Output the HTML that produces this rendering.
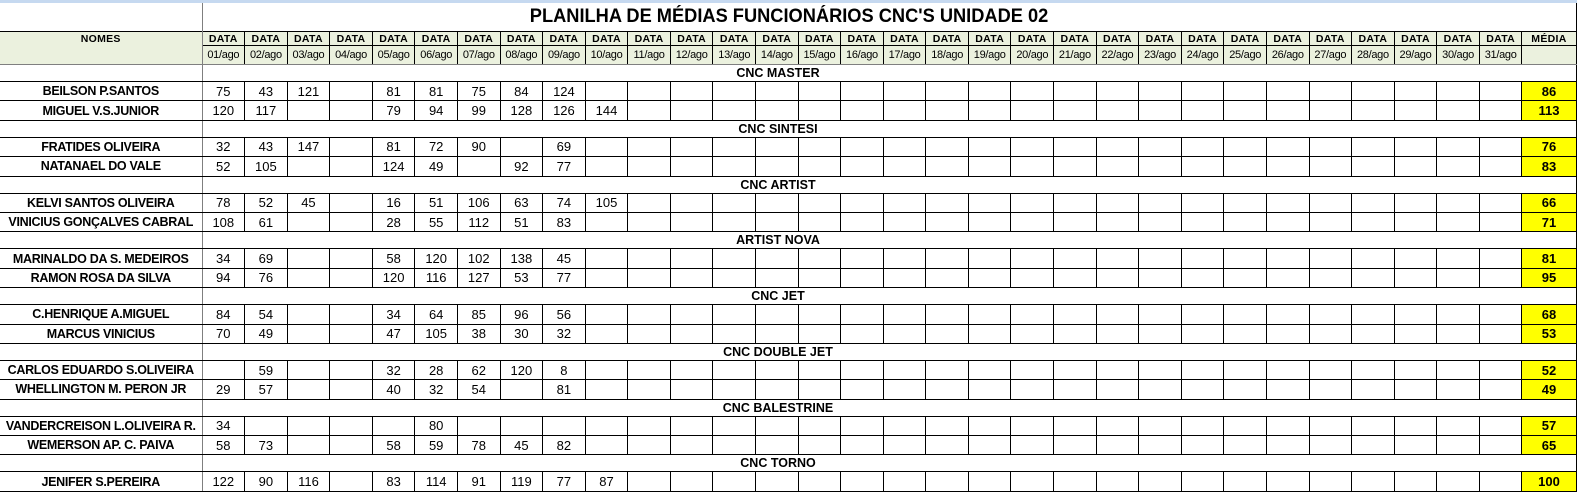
<!DOCTYPE html>
<html><head><meta charset="utf-8">
<style>
html,body{margin:0;padding:0;background:#fff;width:1577px;height:491px;overflow:hidden}
.top{position:absolute;left:0;top:0;width:1577px;height:3px;background:#c6d9f0}
table{position:absolute;left:0;top:3px;border-collapse:collapse;table-layout:fixed;width:1576px;font-family:"Liberation Sans",Arial,sans-serif;color:#000}
td{border:1px solid #000;padding:0;text-align:center;vertical-align:middle;overflow:hidden;white-space:nowrap;font-size:13px}
td.n{border-left:none;border-right:1px solid #7f7f7f;font-weight:bold;font-size:12.5px;letter-spacing:-0.3px}
tr.t td{border:none;height:28px}
tr.t td.n{border-right:1px solid #7f7f7f}
tr.t td.ti{font-size:19px;font-weight:bold;border-right:1px solid #000;padding-right:200px}
tr.t td.ti span{display:inline-block;transform:scaleX(0.96)}
tr.h1 td{background:#ebf1de;font-weight:bold;font-size:10.5px;height:13px;letter-spacing:0.3px}
tr.h2 td{background:#ebf1de;font-size:11px;height:18px;letter-spacing:-0.3px}
tr.h1 td.n{border-top:1px solid #000;border-bottom:none}
tr.h2 td.n{border-top:none;border-bottom:1px solid #7f7f7f}
tr.h2 td{border-bottom:1px solid #7f7f7f}
tr.s td{height:16px;border-left:none;border-right:none;font-weight:bold;font-size:12.5px}
tr.s td.n{border-right:1px solid #7f7f7f}
tr.s td.sc{border-right:1px solid #000;padding-right:222px}
tr.r td{height:18.4px}
td.m{background:#ffff00;font-weight:bold;border-right:1px solid #000}
</style></head><body>
<div class="top"></div>
<table>
<colgroup><col style="width:202px">
<col span="31" style="width:42.58px"><col style="width:54px"></colgroup>
<tr class="t"><td class="n"></td><td class="ti" colspan="32"><span>PLANILHA DE MÉDIAS FUNCIONÁRIOS CNC'S UNIDADE 02</span></td></tr>
<tr class="h1"><td class="n">NOMES</td><td>DATA</td><td>DATA</td><td>DATA</td><td>DATA</td><td>DATA</td><td>DATA</td><td>DATA</td><td>DATA</td><td>DATA</td><td>DATA</td><td>DATA</td><td>DATA</td><td>DATA</td><td>DATA</td><td>DATA</td><td>DATA</td><td>DATA</td><td>DATA</td><td>DATA</td><td>DATA</td><td>DATA</td><td>DATA</td><td>DATA</td><td>DATA</td><td>DATA</td><td>DATA</td><td>DATA</td><td>DATA</td><td>DATA</td><td>DATA</td><td>DATA</td><td>MÉDIA</td></tr>
<tr class="h2"><td class="n"></td><td>01/ago</td><td>02/ago</td><td>03/ago</td><td>04/ago</td><td>05/ago</td><td>06/ago</td><td>07/ago</td><td>08/ago</td><td>09/ago</td><td>10/ago</td><td>11/ago</td><td>12/ago</td><td>13/ago</td><td>14/ago</td><td>15/ago</td><td>16/ago</td><td>17/ago</td><td>18/ago</td><td>19/ago</td><td>20/ago</td><td>21/ago</td><td>22/ago</td><td>23/ago</td><td>24/ago</td><td>25/ago</td><td>26/ago</td><td>27/ago</td><td>28/ago</td><td>29/ago</td><td>30/ago</td><td>31/ago</td><td></td></tr>

<tr class="s"><td class="n"></td><td class="sc" colspan="32">CNC MASTER</td></tr>
<tr class="r"><td class="n">BEILSON P.SANTOS</td><td>75</td><td>43</td><td>121</td><td></td><td>81</td><td>81</td><td>75</td><td>84</td><td>124</td><td></td><td></td><td></td><td></td><td></td><td></td><td></td><td></td><td></td><td></td><td></td><td></td><td></td><td></td><td></td><td></td><td></td><td></td><td></td><td></td><td></td><td></td><td class="m">86</td></tr>
<tr class="r"><td class="n">MIGUEL V.S.JUNIOR</td><td>120</td><td>117</td><td></td><td></td><td>79</td><td>94</td><td>99</td><td>128</td><td>126</td><td>144</td><td></td><td></td><td></td><td></td><td></td><td></td><td></td><td></td><td></td><td></td><td></td><td></td><td></td><td></td><td></td><td></td><td></td><td></td><td></td><td></td><td></td><td class="m">113</td></tr>

<tr class="s"><td class="n"></td><td class="sc" colspan="32">CNC SINTESI</td></tr>
<tr class="r"><td class="n">FRATIDES OLIVEIRA</td><td>32</td><td>43</td><td>147</td><td></td><td>81</td><td>72</td><td>90</td><td></td><td>69</td><td></td><td></td><td></td><td></td><td></td><td></td><td></td><td></td><td></td><td></td><td></td><td></td><td></td><td></td><td></td><td></td><td></td><td></td><td></td><td></td><td></td><td></td><td class="m">76</td></tr>
<tr class="r"><td class="n">NATANAEL DO VALE</td><td>52</td><td>105</td><td></td><td></td><td>124</td><td>49</td><td></td><td>92</td><td>77</td><td></td><td></td><td></td><td></td><td></td><td></td><td></td><td></td><td></td><td></td><td></td><td></td><td></td><td></td><td></td><td></td><td></td><td></td><td></td><td></td><td></td><td></td><td class="m">83</td></tr>

<tr class="s"><td class="n"></td><td class="sc" colspan="32">CNC ARTIST</td></tr>
<tr class="r"><td class="n">KELVI SANTOS OLIVEIRA</td><td>78</td><td>52</td><td>45</td><td></td><td>16</td><td>51</td><td>106</td><td>63</td><td>74</td><td>105</td><td></td><td></td><td></td><td></td><td></td><td></td><td></td><td></td><td></td><td></td><td></td><td></td><td></td><td></td><td></td><td></td><td></td><td></td><td></td><td></td><td></td><td class="m">66</td></tr>
<tr class="r"><td class="n">VINICIUS GONÇALVES CABRAL</td><td>108</td><td>61</td><td></td><td></td><td>28</td><td>55</td><td>112</td><td>51</td><td>83</td><td></td><td></td><td></td><td></td><td></td><td></td><td></td><td></td><td></td><td></td><td></td><td></td><td></td><td></td><td></td><td></td><td></td><td></td><td></td><td></td><td></td><td></td><td class="m">71</td></tr>

<tr class="s"><td class="n"></td><td class="sc" colspan="32">ARTIST NOVA</td></tr>
<tr class="r"><td class="n">MARINALDO DA S. MEDEIROS</td><td>34</td><td>69</td><td></td><td></td><td>58</td><td>120</td><td>102</td><td>138</td><td>45</td><td></td><td></td><td></td><td></td><td></td><td></td><td></td><td></td><td></td><td></td><td></td><td></td><td></td><td></td><td></td><td></td><td></td><td></td><td></td><td></td><td></td><td></td><td class="m">81</td></tr>
<tr class="r"><td class="n">RAMON ROSA DA SILVA</td><td>94</td><td>76</td><td></td><td></td><td>120</td><td>116</td><td>127</td><td>53</td><td>77</td><td></td><td></td><td></td><td></td><td></td><td></td><td></td><td></td><td></td><td></td><td></td><td></td><td></td><td></td><td></td><td></td><td></td><td></td><td></td><td></td><td></td><td></td><td class="m">95</td></tr>

<tr class="s"><td class="n"></td><td class="sc" colspan="32">CNC JET</td></tr>
<tr class="r"><td class="n">C.HENRIQUE A.MIGUEL</td><td>84</td><td>54</td><td></td><td></td><td>34</td><td>64</td><td>85</td><td>96</td><td>56</td><td></td><td></td><td></td><td></td><td></td><td></td><td></td><td></td><td></td><td></td><td></td><td></td><td></td><td></td><td></td><td></td><td></td><td></td><td></td><td></td><td></td><td></td><td class="m">68</td></tr>
<tr class="r"><td class="n">MARCUS VINICIUS</td><td>70</td><td>49</td><td></td><td></td><td>47</td><td>105</td><td>38</td><td>30</td><td>32</td><td></td><td></td><td></td><td></td><td></td><td></td><td></td><td></td><td></td><td></td><td></td><td></td><td></td><td></td><td></td><td></td><td></td><td></td><td></td><td></td><td></td><td></td><td class="m">53</td></tr>

<tr class="s"><td class="n"></td><td class="sc" colspan="32">CNC DOUBLE JET</td></tr>
<tr class="r"><td class="n">CARLOS EDUARDO S.OLIVEIRA</td><td></td><td>59</td><td></td><td></td><td>32</td><td>28</td><td>62</td><td>120</td><td>8</td><td></td><td></td><td></td><td></td><td></td><td></td><td></td><td></td><td></td><td></td><td></td><td></td><td></td><td></td><td></td><td></td><td></td><td></td><td></td><td></td><td></td><td></td><td class="m">52</td></tr>
<tr class="r"><td class="n">WHELLINGTON M. PERON JR</td><td>29</td><td>57</td><td></td><td></td><td>40</td><td>32</td><td>54</td><td></td><td>81</td><td></td><td></td><td></td><td></td><td></td><td></td><td></td><td></td><td></td><td></td><td></td><td></td><td></td><td></td><td></td><td></td><td></td><td></td><td></td><td></td><td></td><td></td><td class="m">49</td></tr>

<tr class="s"><td class="n"></td><td class="sc" colspan="32">CNC BALESTRINE</td></tr>
<tr class="r"><td class="n">VANDERCREISON L.OLIVEIRA R.</td><td>34</td><td></td><td></td><td></td><td></td><td>80</td><td></td><td></td><td></td><td></td><td></td><td></td><td></td><td></td><td></td><td></td><td></td><td></td><td></td><td></td><td></td><td></td><td></td><td></td><td></td><td></td><td></td><td></td><td></td><td></td><td></td><td class="m">57</td></tr>
<tr class="r"><td class="n">WEMERSON AP. C. PAIVA</td><td>58</td><td>73</td><td></td><td></td><td>58</td><td>59</td><td>78</td><td>45</td><td>82</td><td></td><td></td><td></td><td></td><td></td><td></td><td></td><td></td><td></td><td></td><td></td><td></td><td></td><td></td><td></td><td></td><td></td><td></td><td></td><td></td><td></td><td></td><td class="m">65</td></tr>

<tr class="s"><td class="n"></td><td class="sc" colspan="32">CNC TORNO</td></tr>
<tr class="r"><td class="n">JENIFER S.PEREIRA</td><td>122</td><td>90</td><td>116</td><td></td><td>83</td><td>114</td><td>91</td><td>119</td><td>77</td><td>87</td><td></td><td></td><td></td><td></td><td></td><td></td><td></td><td></td><td></td><td></td><td></td><td></td><td></td><td></td><td></td><td></td><td></td><td></td><td></td><td></td><td></td><td class="m">100</td></tr>
</table>
</body></html>
